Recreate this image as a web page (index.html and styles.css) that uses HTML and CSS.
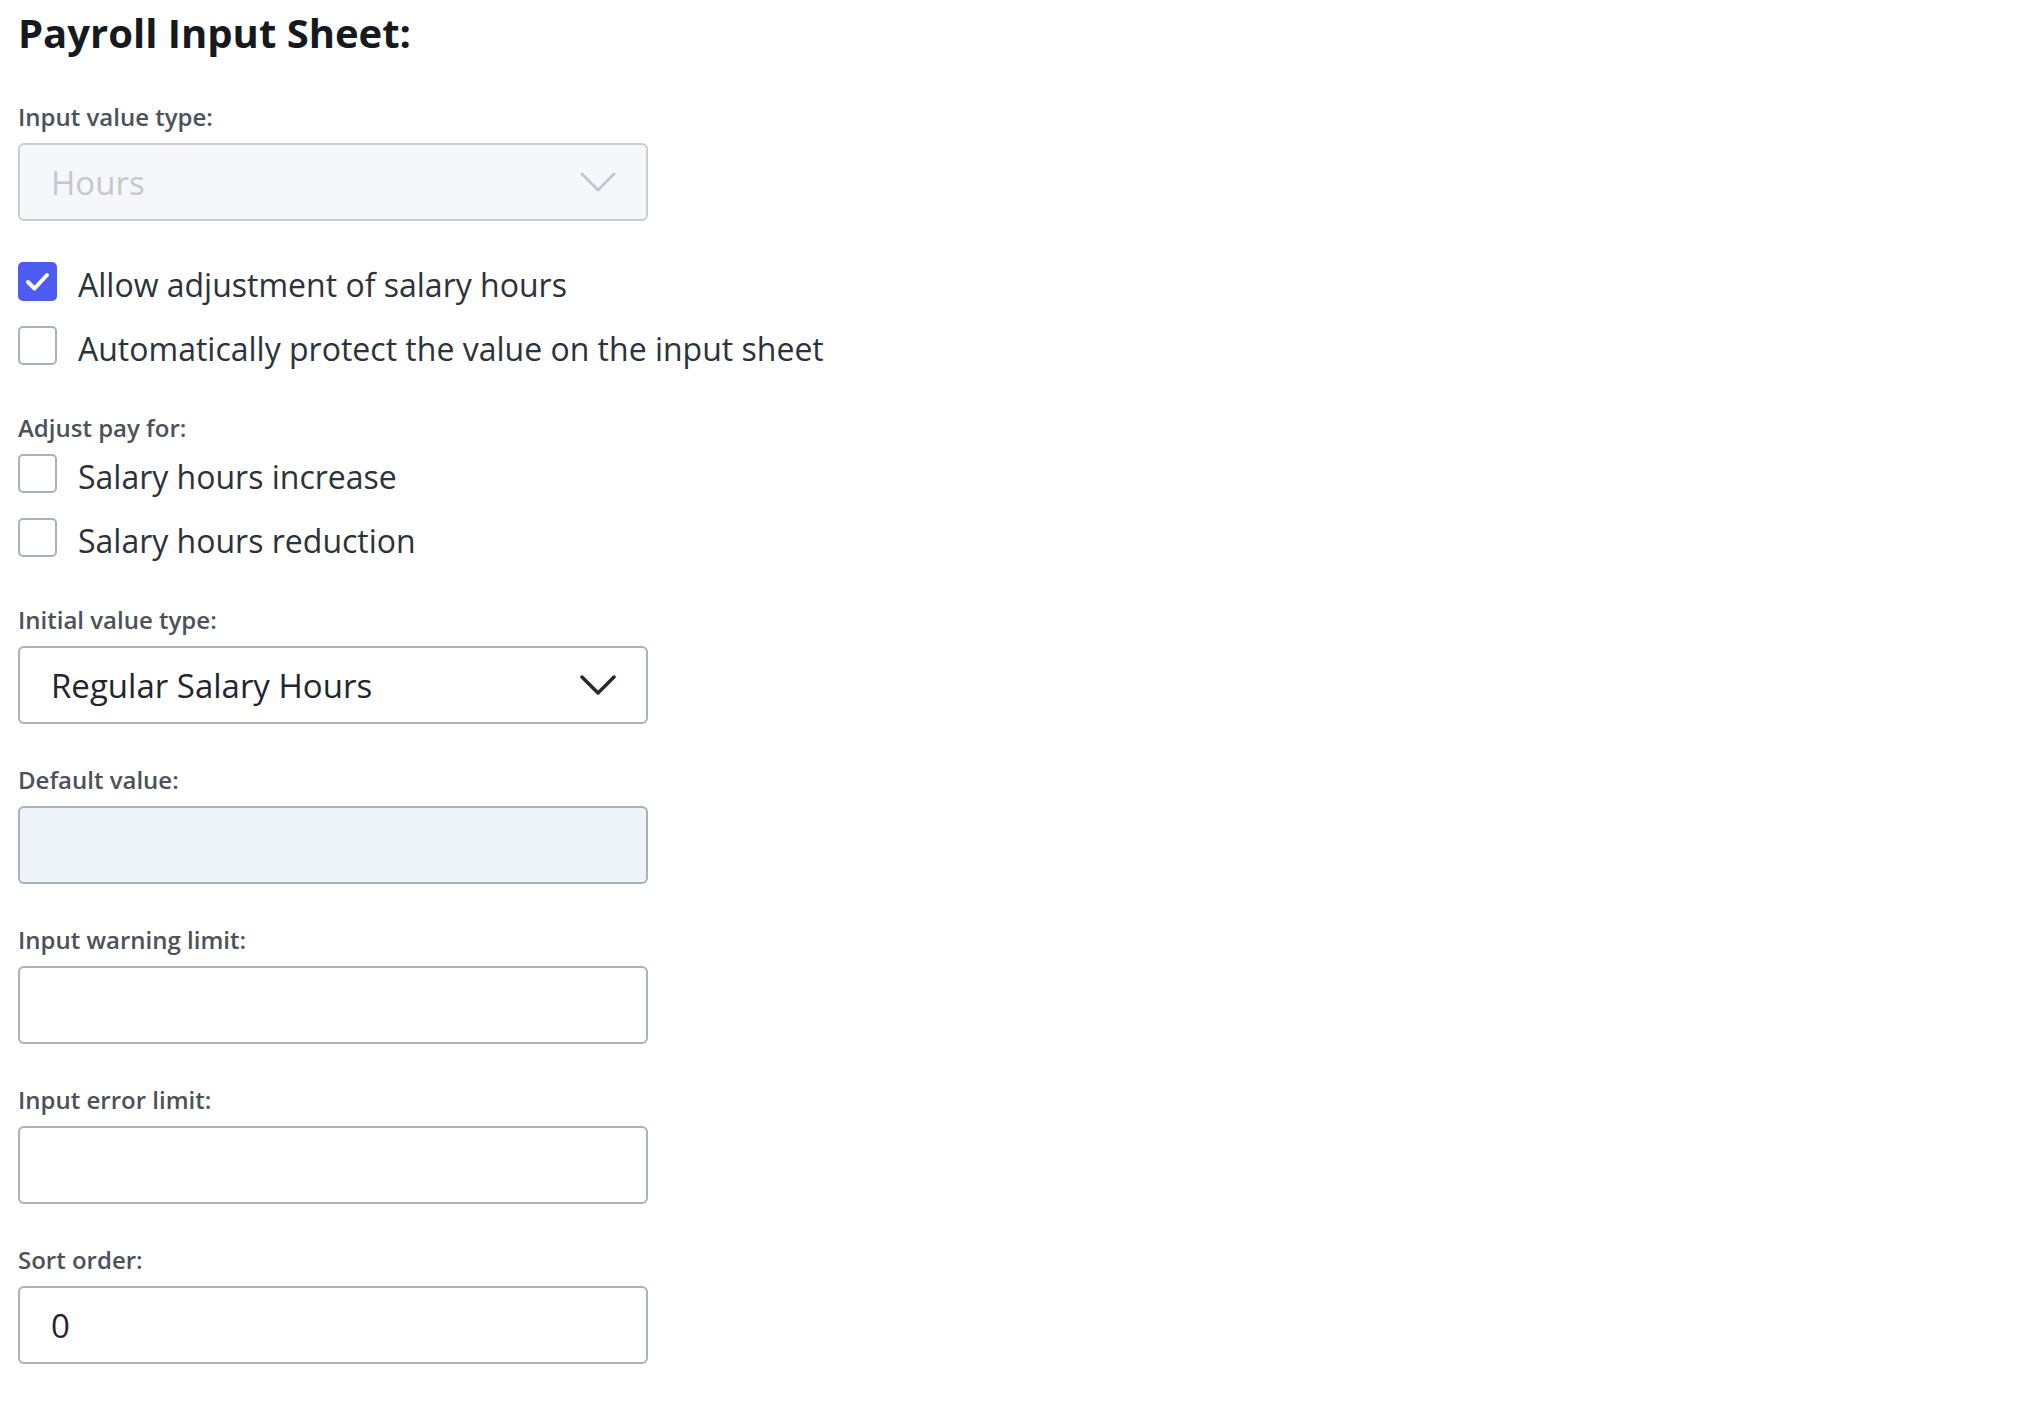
FILE: index.html
```html
<!DOCTYPE html>
<html lang="en">
<head>
<meta charset="utf-8">
<title>Payroll Input Sheet</title>
<link rel="stylesheet" href="styles.css">
</head>
<body>
<main class="form">
  <h1 class="title">Payroll Input Sheet:</h1>

  <div class="field">
    <label class="field-label">Input value type:</label>
    <div class="box box-disabled select">
      <span class="box-text">Hours</span>
      <svg class="chevron" viewBox="0 0 36 20" width="36" height="20"><polyline points="2,2 18,18 34,2"/></svg>
    </div>
  </div>

  <div class="checks">
    <div class="check-row">
      <span class="checkbox checked"><svg viewBox="0 0 39 39" width="39" height="39"><polyline points="10,20 16.5,26.5 29,13"/></svg></span>
      <span class="check-text">Allow adjustment of salary hours</span>
    </div>
    <div class="check-row">
      <span class="checkbox"></span>
      <span class="check-text">Automatically protect the value on the input sheet</span>
    </div>
  </div>

  <div class="group">
    <div class="field-label">Adjust pay for:</div>
    <div class="checks">
      <div class="check-row">
        <span class="checkbox"></span>
        <span class="check-text">Salary hours increase</span>
      </div>
      <div class="check-row">
        <span class="checkbox"></span>
        <span class="check-text">Salary hours reduction</span>
      </div>
    </div>
  </div>

  <div class="field">
    <label class="field-label">Initial value type:</label>
    <div class="box select">
      <span class="box-text">Regular Salary Hours</span>
      <svg class="chevron dark" viewBox="0 0 36 20" width="36" height="20"><polyline points="2,2 18,18 34,2"/></svg>
    </div>
  </div>

  <div class="field">
    <label class="field-label">Default value:</label>
    <div class="box box-tinted"></div>
  </div>

  <div class="field">
    <label class="field-label">Input warning limit:</label>
    <div class="box"></div>
  </div>

  <div class="field">
    <label class="field-label">Input error limit:</label>
    <div class="box"></div>
  </div>

  <div class="field">
    <label class="field-label">Sort order:</label>
    <div class="box"><span class="box-text">0</span></div>
  </div>
</main>
</body>
</html>
```

FILE: styles.css
```css
* {
  box-sizing: border-box;
}

html, body {
  margin: 0;
  padding: 0;
  background: #ffffff;
}

body {
  font-family: "Open Sans", "Noto Sans", "Liberation Sans", sans-serif;
  color: #2b323a;
}

.form {
  display: flex;
  flex-direction: column;
  gap: 41px;
  padding: 5px 18px 40px 18px;
}

.title {
  margin: 0;
  font-size: 40px;
  line-height: 56px;
  font-weight: 700;
  color: #151a1f;
}

.field,
.group {
  display: flex;
  flex-direction: column;
  gap: 11px;
}

.field-label {
  display: block;
  font-size: 24px;
  line-height: 30px;
  font-weight: 600;
  color: #4b525a;
}

.box {
  width: 630px;
  height: 78px;
  border: 2px solid #a9b1b9;
  border-radius: 6px;
  background: #ffffff;
  display: flex;
  align-items: center;
  padding: 0 30px 0 31px;
}

.box-disabled {
  border-color: #c9ced4;
  background: #f5f7fb;
}

.box-disabled .box-text {
  color: #c3c8cf;
}

.box-tinted {
  background: #eff3fa;
}

.select {
  justify-content: space-between;
}

.box-text {
  font-size: 33px;
  line-height: 45px;
  color: #1f2630;
}

.chevron {
  display: block;
  flex: none;
}

.chevron polyline {
  fill: none;
  stroke: #c2c7cd;
  stroke-width: 3;
  stroke-linecap: round;
  stroke-linejoin: round;
}

.chevron.dark polyline {
  stroke: #222a33;
  stroke-width: 3.5;
}

.checks {
  display: flex;
  flex-direction: column;
  gap: 18px;
}

.check-row {
  display: flex;
  align-items: flex-start;
  gap: 21px;
}

.checkbox {
  flex: none;
  width: 39px;
  height: 39px;
  border: 2px solid #a9b1b9;
  border-radius: 5px;
  background: #ffffff;
  display: flex;
  align-items: center;
  justify-content: center;
}

.checkbox.checked {
  border: none;
  background: #4c5cf1;
}

.checkbox svg polyline {
  fill: none;
  stroke: #ffffff;
  stroke-width: 4;
  stroke-linecap: round;
  stroke-linejoin: round;
}

.check-text {
  font-size: 32px;
  line-height: 46px;
  color: #2b323a;
}
```
